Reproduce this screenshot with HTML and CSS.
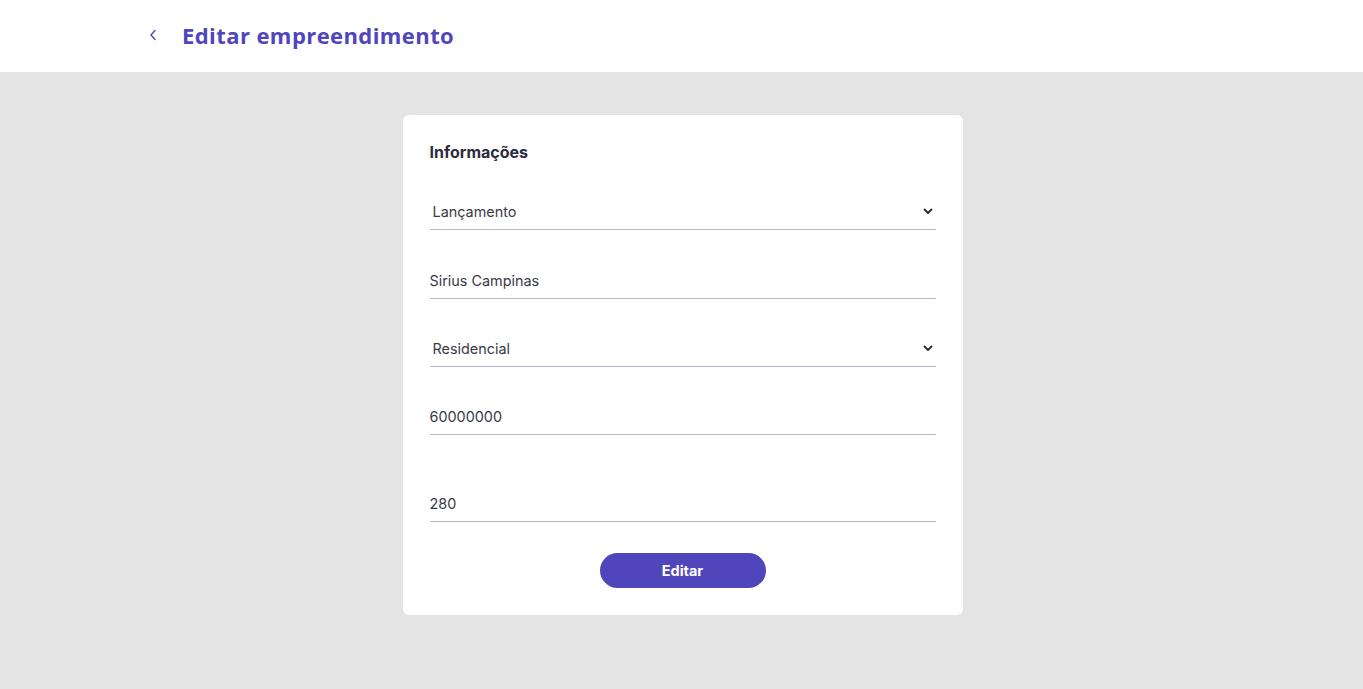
FILE: index.html
```html
<!DOCTYPE html>
<html lang="pt-BR">
<head>
<meta charset="utf-8">
<title>Editar empreendimento</title>
<link rel="stylesheet" href="styles.css">
</head>
<body>
<header class="topbar">
  <div class="topbar-inner">
    <button class="back" type="button" aria-label="Voltar">
      <svg width="8" height="12" viewBox="0 0 8 12"><path d="M6 1.5 L2 6 L6 10.5" fill="none" stroke="#5046bb" stroke-width="1.4" stroke-linecap="round" stroke-linejoin="round"/></svg>
    </button>
    <h1 class="title">Editar empreendimento</h1>
  </div>
</header>
<main class="content">
  <form class="card">
    <h2 class="card-title">Informações</h2>
    <div class="field select-field first-field">
      <span class="value sel">Lançamento</span>
      <svg class="chev" width="10" height="7" viewBox="0 0 10 7"><path d="M1.5 1.5 L5 5 L8.5 1.5" fill="none" stroke="#2a2a36" stroke-width="1.8" stroke-linecap="round" stroke-linejoin="round"/></svg>
    </div>
    <div class="field"><span class="value">Sirius Campinas</span></div>
    <div class="field select-field">
      <span class="value sel">Residencial</span>
      <svg class="chev" width="10" height="7" viewBox="0 0 10 7"><path d="M1.5 1.5 L5 5 L8.5 1.5" fill="none" stroke="#2a2a36" stroke-width="1.8" stroke-linecap="round" stroke-linejoin="round"/></svg>
    </div>
    <div class="field"><span class="value">60000000</span></div>
    <div class="field field-spaced"><span class="value">280</span></div>
    <div class="actions">
      <button class="btn" type="button">Editar</button>
    </div>
  </form>
</main>
</body>
</html>
```

FILE: styles.css
```css
* { box-sizing: border-box; }
html, body { margin: 0; padding: 0; }
body {
  background: #e4e4e4;
  font-family: "Inter", "Liberation Sans", sans-serif;
  min-height: 689px;
}
.topbar {
  background: #ffffff;
  height: 72px;
}
.topbar-inner {
  display: flex;
  align-items: center;
  height: 70px;
  padding-left: 143px;
}
.back {
  border: 0;
  background: transparent;
  padding: 0;
  width: 20px;
  height: 20px;
  display: flex;
  align-items: center;
  justify-content: center;
  margin-right: 19px;
  cursor: pointer;
}
.title {
  margin: 0;
  font-family: "Open Sans", "Liberation Sans", sans-serif;
  font-weight: 700;
  font-size: 22px;
  color: #5046bb;
  letter-spacing: 0.42px;
}
.content {
  display: flex;
  justify-content: center;
  padding-top: 43px;
  padding-left: 2px;
}
.card {
  width: 560px;
  background: #ffffff;
  border-radius: 6px;
  padding: 27px 27px 27px;
  display: flex;
  flex-direction: column;
  gap: 32px;
}
.card-title {
  margin: 0;
  font-size: 16px;
  line-height: 20px;
  font-weight: 700;
  color: #2b2b3b;
}
.field {
  height: 36px;
  display: flex;
  align-items: center;
  border-bottom: 1px solid #bab3d8;
  font-size: 14.4px;
  color: #3a3a46;
}
.value { padding-bottom: 1px; }
.first-field { margin-bottom: 1px; }
.field-spaced { margin-top: 19px; }
.sel { padding-left: 3px; }
.select-field { justify-content: space-between; }
.chev { margin-right: 3px; }
.actions {
  display: flex;
  justify-content: center;
  margin-top: -1px;
}
.btn {
  width: 166px;
  height: 35px;
  border: 0;
  border-radius: 18px;
  background: #5046bb;
  color: #ffffff;
  font-family: "Inter", "Liberation Sans", sans-serif;
  font-weight: 700;
  font-size: 14.4px;
  cursor: pointer;
}
```
